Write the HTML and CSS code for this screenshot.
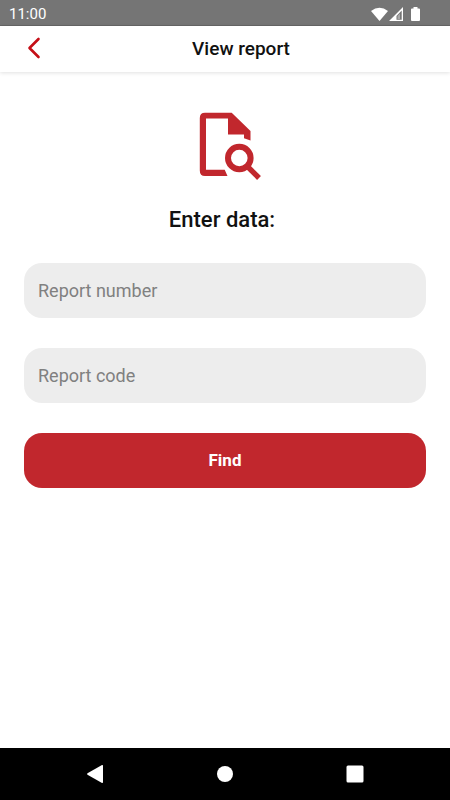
FILE: index.html
```
<!DOCTYPE html>
<html lang="en">
<head>
    <meta charset="UTF-8">
    <meta name="viewport" content="width=device-width, initial-scale=1.0">
    <title>View report</title>
    <link rel="stylesheet" href="styles.css">
</head>
<body>
    <!-- Status bar -->
    <div class="status-bar">
        <span>11:00</span>
        <svg class="status-icons" width="50" height="16" viewBox="0 0 50 16" fill="#fff">
            <path d="M0 5Q8.500 -1.500 17 5L8.500 15Z"/>
            <path fill-rule="evenodd" d="M32 1V15H18ZM30.700 4.500L25.500 10V13.700H30.700Z"/>
            <path d="M26.500 10L29 7.500V13H26.500Z" fill="#a8a8a8"/>
            <path d="M42.500 1h4v1.500h1.500a1 1 0 0 1 1 1V14a1 1 0 0 1-1 1h-7a1 1 0 0 1-1-1V3.500a1 1 0 0 1 1-1h1.500z"/>
        </svg>
    </div>

    <header class="header">
        <button class="back" type="button" aria-label="Back">
            <svg width="14" height="22" viewBox="0 0 14 22" fill="none" stroke="#c50f17" stroke-width="2.600" stroke-linecap="round" stroke-linejoin="round">
                <path d="M11.500 2L2.500 11L11.500 20"/>
            </svg>
        </button>
        <h1>View report</h1>
    </header>

    <!-- Search form -->
    <main class="content">
        <svg class="report-icon" width="72" height="70" viewBox="-10 0 72 70">
            <path fill="#c1272d" fill-rule="evenodd" d="M6 .7H32.700L51.500 19V28.500L45 26.300V22.600H29V6.500H7V57.800H25.700L28.500 64H6Q.8 64 .8 58.500V6Q.8 .7 6 .7Z"/>
            <circle cx="40.300" cy="46" r="11.300" fill="none" stroke="#c1272d" stroke-width="6"/>
            <path d="M48 54L60 66" stroke="#c1272d" stroke-width="5.400"/>
        </svg>
        <h2>Enter data:</h2>
        <form class="form-container" onsubmit="return false">
            <input type="text" id="reportNumber" placeholder="Report number" aria-label="Report number">
            <input type="text" id="reportCode" placeholder="Report code" aria-label="Report code">
            <button class="find" type="submit">Find</button>
        </form>
    </main>

    <!-- System navigation -->
    <nav class="nav-bar">
        <button type="button" aria-label="Back">
            <svg width="18" height="20" viewBox="0 0 18 20" fill="#fff"><path d="M16 1Q17 .6 17 2V18Q17 19.400 16 19L1.500 10.700Q.5 10 1.500 9.300Z"/></svg>
        </button>
        <button type="button" aria-label="Home">
            <svg width="18" height="20" viewBox="0 0 18 20" fill="#fff"><circle cx="9" cy="10" r="8"/></svg>
        </button>
        <button type="button" aria-label="Recent apps">
            <svg width="18" height="20" viewBox="0 0 18 20" fill="#fff"><rect x=".5" y="1.500" width="17" height="17" rx="1.500"/></svg>
        </button>
    </nav>
</body>
</html>
```
FILE: styles.css
```
* { box-sizing: border-box; }
body { margin: 0; min-height: 100vh; display: flex; flex-direction: column; background-color: #fff; color: #111; font-family: Roboto, sans-serif; }
h1, h2 { margin: 0; font-weight: 500; }
button { padding: 0; border: none; background: none; font-family: inherit; cursor: pointer; }
svg { display: block; }

.status-bar { display: flex; justify-content: space-between; align-items: center; height: 26px; padding: 2px 29px 0 9px; background-color: #757575; border-bottom: 1px solid #666; color: #fff; font-size: 15px; }

.header { display: flex; align-items: center; height: 46px; padding-left: 18px; box-shadow: 0 1px 4px rgba(0, 0, 0, 0.12); }
.header h1 { flex: 1; padding-right: 18px; text-align: center; font-size: 19px; line-height: 24px; }
.back { display: flex; justify-content: center; align-items: center; width: 32px; height: 44px; padding-bottom: 2px; }

.content { flex: 1; padding: 40px 24px; }
.report-icon { margin: 0 auto; }
.content h2 { margin: 24px 0 29px; padding-right: 6px; text-align: center; font-size: 22px; line-height: 28px; }

.form-container { display: flex; flex-direction: column; gap: 30px; }
.form-container input { width: 100%; height: 55px; padding: 0 14px; border: none; border-radius: 18px; background-color: #ededed; color: #111; font-family: inherit; font-size: 18px; }
.form-container input::placeholder { color: #808080; opacity: 1; }
.find { height: 55px; padding-bottom: 2px; border-radius: 18px; background-color: #c1272d; color: #fff; font-size: 17px; font-weight: 700; }

.nav-bar { display: flex; justify-content: space-around; align-items: center; height: 52px; padding: 0 30px; background-color: #000; }
.nav-bar button { padding: 8px; }
```
